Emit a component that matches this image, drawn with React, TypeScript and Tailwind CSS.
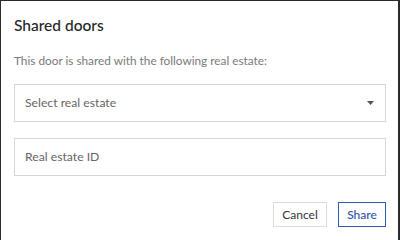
import React from "react";

export default function App() {
  return (
    <div className="w-[400px] h-[240px] bg-white border-t border-l border-r-2 border-[#2b2b2b] overflow-hidden" style={{ fontFamily: "Lato, 'Open Sans', sans-serif" }}>
      <div className="pl-[13px] pr-[13px] pt-[13px]">
        <h1 className="text-[15.5px] leading-[22px] text-[#252525] font-medium">Shared doors</h1>
        <p className="mt-[17px] text-[11.8px] leading-[16px] text-[#7a7a7a]">This door is shared with the following real estate:</p>
        <div className="mt-[15px] w-[372px] h-[38px] border border-[#d6d6d6] flex items-center justify-between pl-[10px] pr-[11px]">
          <span className="text-[12.2px] text-[#666]">Select real estate</span>
          <svg width="7" height="4" viewBox="0 0 7 4"><path d="M0 0 L7 0 L3.5 4 Z" fill="#555" /></svg>
        </div>
        <div className="mt-[16px] w-[372px] h-[38px] border border-[#d6d6d6] flex items-center pl-[10px]">
          <span className="text-[12.2px] text-[#666]">Real estate ID</span>
        </div>
        <div className="mt-[26px] w-[372px] flex justify-end gap-[11px]">
          <button className="w-[54px] h-[25px] border border-[#dcdcdc] text-[12px] text-[#333]">Cancel</button>
          <button className="w-[48px] h-[25px] border-[1.5px] border-[#2e5bb8] text-[12px] text-[#2a52a8] font-medium">Share</button>
        </div>
      </div>
    </div>
  );
}
